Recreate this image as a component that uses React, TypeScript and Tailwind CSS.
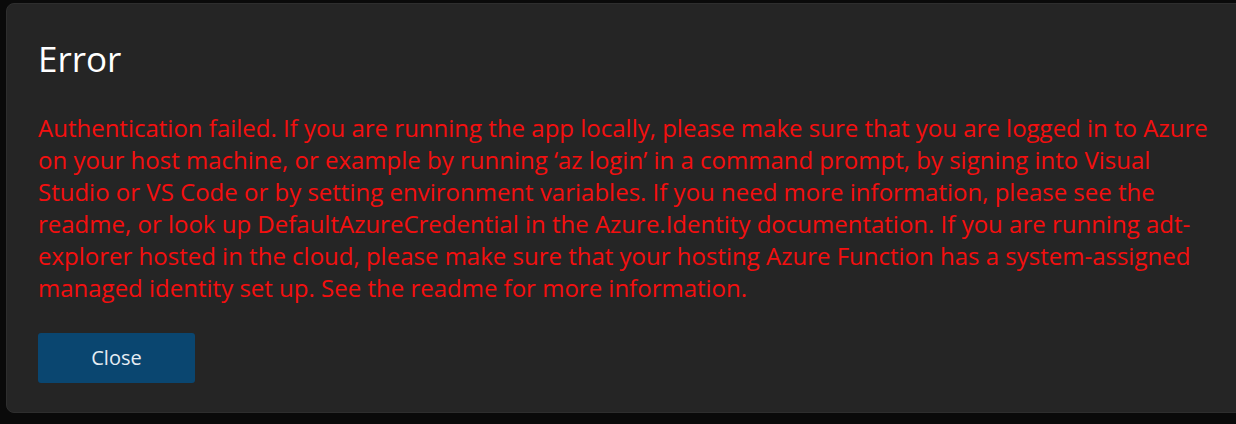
import React from "react";

const lines = [
  "Authentication failed. If you are running the app locally, please make sure that you are logged in to Azure",
  "on your host machine, or example by running \u2018az login\u2019 in a command prompt, by signing into Visual",
  "Studio or VS Code or by setting environment variables. If you need more information, please see the",
  "readme, or look up DefaultAzureCredential in the Azure.Identity documentation. If you are running adt-",
  "explorer hosted in the cloud, please make sure that your hosting Azure Function has a system-assigned",
  "managed identity set up. See the readme for more information.",
];

export default function App() {
  return (
    <div className="w-[1236px] h-[424px] bg-[#0a0a0a] pl-[6px] pt-[3px] overflow-hidden" style={{ fontFamily: '"Open Sans", "Noto Sans", sans-serif' }}>
      <div className="w-[1240px] h-[410px] bg-[#252525] rounded-[8px] border border-[#2e2e2e] pl-[31px] pt-[35px]">
        <h1 className="text-[35px] leading-[40px] text-white">Error</h1>
        <div className="mt-[33px] text-[#f40f0f] text-[24px] leading-[32px]">
          {lines.map((l) => (
            <div key={l} className="whitespace-nowrap">{l}</div>
          ))}
        </div>
        <button className="mt-[29px] w-[157px] h-[50px] bg-[#0a4670] rounded-[3px] text-[#e6edf3] text-[20px]">
          Close
        </button>
      </div>
    </div>
  );
}
